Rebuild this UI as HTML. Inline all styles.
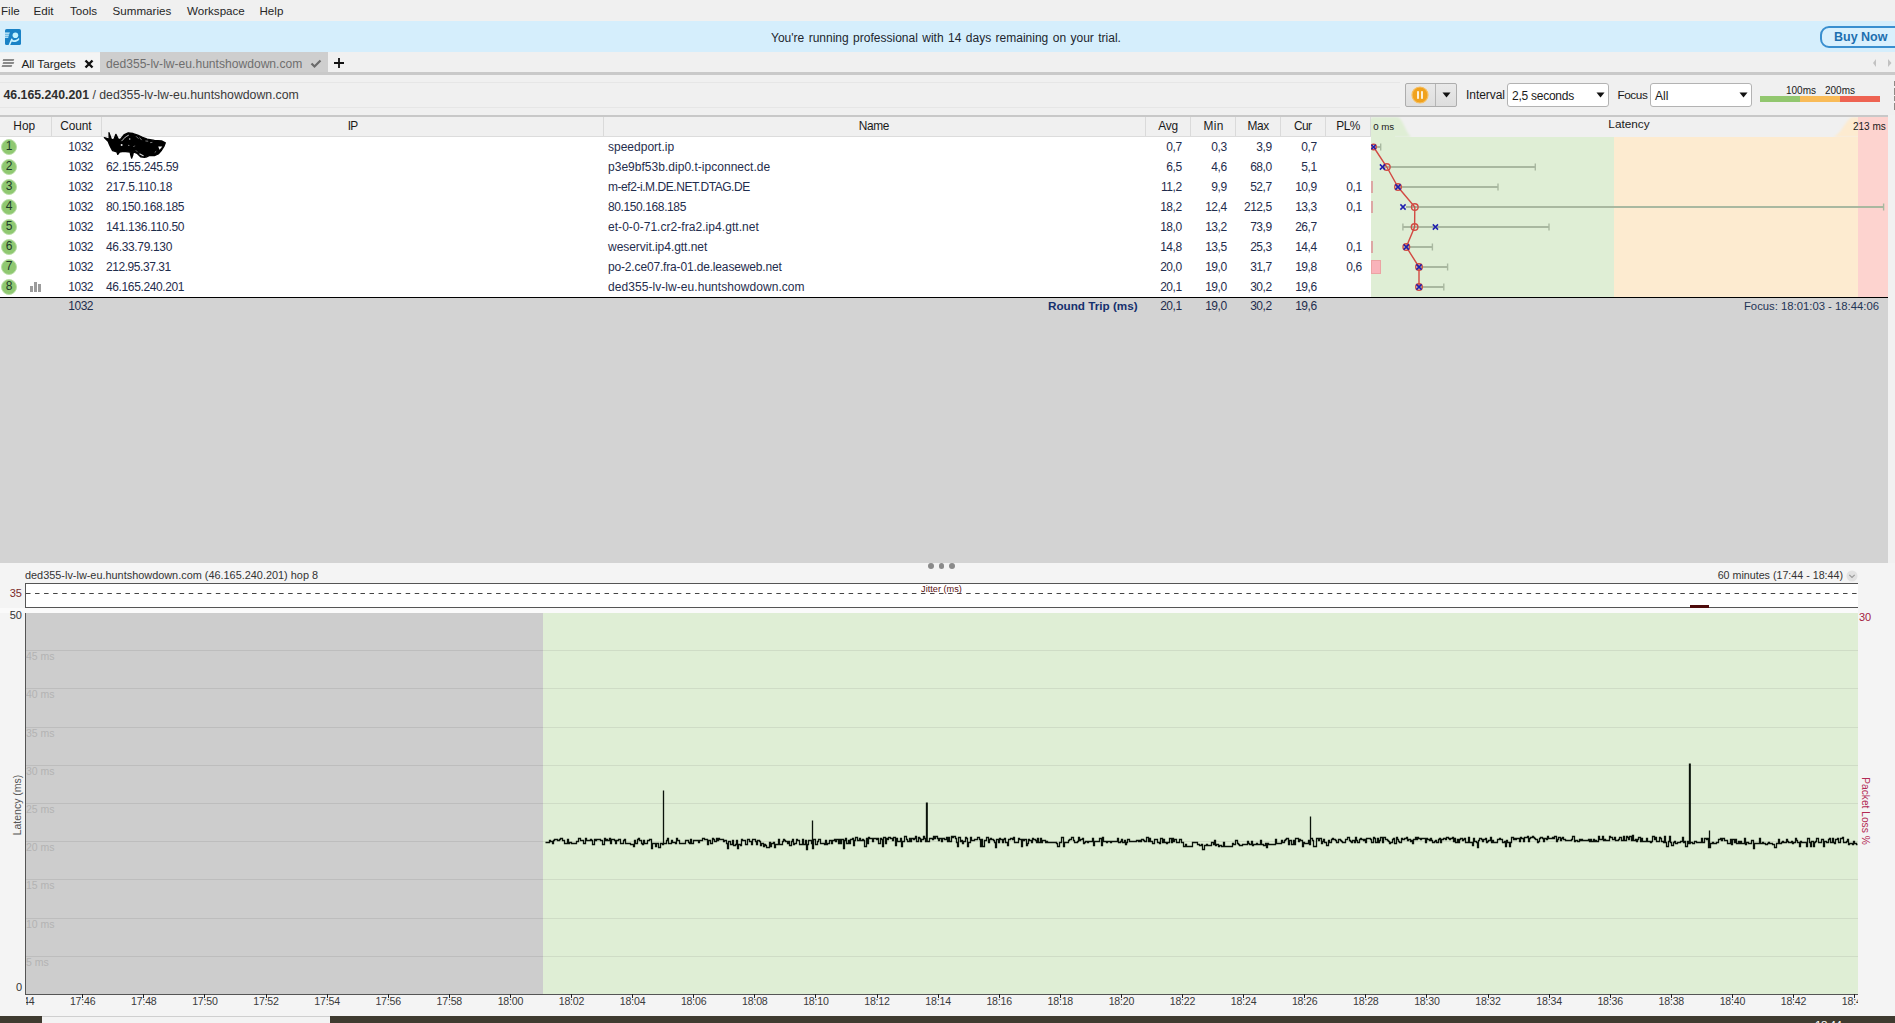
<!DOCTYPE html><html><head><meta charset="utf-8"><title>PingPlotter</title><style>
*{margin:0;padding:0;box-sizing:border-box}
html,body{width:1895px;height:1023px;overflow:hidden;background:#f0f0f0}
body{font-family:"Liberation Sans",sans-serif;font-size:12px;color:#1a1a1a;position:relative}
.a{position:absolute;white-space:nowrap}
.t{position:absolute;white-space:nowrap;line-height:14px;height:14px}
.r{text-align:right}
.c{text-align:center}
</style></head><body><div class="a" style="left:0px;top:0px;width:1895px;height:21px;background:#f0f0f0;"></div>
<div class="t" style="left:1px;top:4px;font-size:11.6px;color:#262626;">File</div>
<div class="t" style="left:33.5px;top:4px;font-size:11.6px;color:#262626;">Edit</div>
<div class="t" style="left:70px;top:4px;font-size:11.6px;color:#262626;">Tools</div>
<div class="t" style="left:112.6px;top:4px;font-size:11.6px;color:#262626;">Summaries</div>
<div class="t" style="left:187px;top:4px;font-size:11.6px;color:#262626;">Workspace</div>
<div class="t" style="left:259.5px;top:4px;font-size:11.6px;color:#262626;">Help</div>
<div class="a" style="left:0px;top:21px;width:1895px;height:31px;background:#d5eefc;"></div>
<svg class="a" style="left:5px;top:29px" width="16" height="16" viewBox="0 0 16 16">
<rect x="0" y="0" width="16" height="16" rx="1.6" fill="#1a82c6"/>
<rect x="0" y="3.5" width="5.8" height="1.3" fill="#d2f4ff"/>
<rect x="0" y="5.5" width="5.2" height="1.3" fill="#d2f4ff"/>
<rect x="0" y="7.5" width="4.6" height="1.3" fill="#d2f4ff"/>
<path d="M5.0 2.8 L7.6 2.8 L3.6 16 L1.0 16 Z" fill="#1a82c6"/>
<path d="M6.3 9.4 L7.8 9.9 L5.2 16 L3.6 16 Z" fill="#d2f4ff"/>
<path d="M6.8 10.8 C9.5 11.6 12.2 11.0 14.0 8.8 L14.3 10.4 C12.4 13.0 9.0 13.4 6.0 12.6 Z" fill="#c4f0ff"/>
<circle cx="10.4" cy="6.3" r="2.8" fill="#c4f3ff"/>
</svg>
<div class="t" style="left:771px;top:31px;font-size:12px;color:#22262e;word-spacing:1.1px">You're running professional with 14 days remaining on your trial.</div>
<div class="a" style="left:1820px;top:26px;width:90px;height:22px;border:2px solid #3a8fcf;border-radius:9px;background:#d9f0fd"></div>
<div class="t" style="left:1834px;top:30px;font-size:12.5px;color:#1d6fb0;font-weight:bold">Buy Now</div>
<div class="a" style="left:0px;top:52px;width:1895px;height:20px;background:#f0f0f0;"></div>
<div class="a" style="left:0px;top:53px;width:100px;height:19px;background:#f4f4f4;"></div>
<div class="a" style="left:100px;top:52px;width:228px;height:20px;background:#cecece;"></div>
<div class="a" style="left:0px;top:72px;width:1895px;height:3px;background:#c9c9c9;"></div>
<div class="a" style="left:3.0px;top:59px;width:11px;height:1.5px;background:#8a8a8a;transform:skewX(-20deg)"></div>
<div class="a" style="left:2.5px;top:62px;width:11px;height:1.5px;background:#8a8a8a;transform:skewX(-20deg)"></div>
<div class="a" style="left:2.0px;top:65px;width:10px;height:1.5px;background:#8a8a8a;transform:skewX(-20deg)"></div>
<div class="t" style="left:21.5px;top:57px;font-size:11.8px;color:#222;letter-spacing:-0.08px">All Targets</div>
<svg class="a" style="left:84px;top:59px" width="10" height="10" viewBox="0 0 10 10"><path d="M1.5 1.5 L8.5 8.5 M8.5 1.5 L1.5 8.5" stroke="#111" stroke-width="2.4" fill="none"/></svg>
<div class="t" style="left:106px;top:57px;font-size:12.1px;color:#6e6e6e;">ded355-lv-lw-eu.huntshowdown.com</div>
<svg class="a" style="left:310px;top:58px" width="12" height="11" viewBox="0 0 12 11"><path d="M1.5 5.5 L4.5 8.5 L10.5 2.5" stroke="#6a6a6a" stroke-width="2.2" fill="none"/></svg>
<svg class="a" style="left:333px;top:57px" width="12" height="12" viewBox="0 0 12 12"><path d="M6 1 V11 M1 6 H11" stroke="#111" stroke-width="1.8" fill="none"/></svg>
<svg class="a" style="left:1870px;top:57px" width="24" height="12" viewBox="0 0 24 12"><path d="M6 2 L3 6 L6 10 Z" fill="#c2c2c2"/><path d="M18 2 L21.5 6 L18 10 Z" fill="#c2c2c2"/></svg>
<div class="a" style="left:0px;top:75px;width:1895px;height:40px;background:#f0f0f0;"></div>
<div class="a" style="left:0px;top:82px;width:1400px;height:1px;background:#e6e6e6;"></div>
<div class="a" style="left:0px;top:107px;width:1400px;height:1px;background:#e6e6e6;"></div>
<div class="t" style="left:3.500px;top:88px;font-size:12.300px;color:#3a3a3a"><b style="color:#2e2e2e">46.165.240.201</b> / ded355-lv-lw-eu.huntshowdown.com</div>
<div class="a" style="left:1405px;top:83px;width:52px;height:24px;border:1px solid #adadad;border-radius:2px;background:linear-gradient(#e9e9e9,#dedede)"></div>
<div class="a" style="left:1435px;top:84px;width:1px;height:22px;background:#b5b5b5;"></div>
<svg class="a" style="left:1411px;top:86px" width="18" height="18" viewBox="0 0 18 18">
<circle cx="9" cy="9" r="8" fill="#f0a21e" stroke="#f6bf62" stroke-width="1.2"/>
<rect x="6" y="5.2" width="2" height="7.6" fill="#fdf0d8"/><rect x="10" y="5.2" width="2" height="7.6" fill="#fdf0d8"/></svg>
<svg class="a" style="left:1442px;top:92px" width="9" height="6" viewBox="0 0 9 6"><path d="M0.5 0.5 H8.5 L4.5 5.5 Z" fill="#111"/></svg>
<div class="t" style="left:1466px;top:88px;font-size:12px;color:#1a1a1a;letter-spacing:-0.05px">Interval</div>
<div class="a" style="left:1507px;top:83px;width:102px;height:24px;border:1px solid #b3b3b3;border-radius:3px;background:#fff"></div>
<div class="t" style="left:1512px;top:89px;font-size:12px;color:#1a1a1a;letter-spacing:-0.25px">2,5 seconds</div>
<svg class="a" style="left:1596px;top:92px" width="9" height="6" viewBox="0 0 9 6"><path d="M0.5 0.5 H8.5 L4.5 5.5 Z" fill="#111"/></svg>
<div class="t" style="left:1617.5px;top:88px;font-size:11.8px;color:#1a1a1a;letter-spacing:-0.45px">Focus</div>
<div class="a" style="left:1650px;top:83px;width:102px;height:24px;border:1px solid #b3b3b3;border-radius:3px;background:#fff"></div>
<div class="t" style="left:1655px;top:89px;font-size:12px;color:#1a1a1a;">All</div>
<svg class="a" style="left:1739px;top:92px" width="9" height="6" viewBox="0 0 9 6"><path d="M0.5 0.5 H8.5 L4.5 5.5 Z" fill="#111"/></svg>
<div class="a" style="left:1760px;top:96px;width:40px;height:6px;background:#92c76f;"></div>
<div class="a" style="left:1800px;top:96px;width:40px;height:6px;background:#f9bb58;"></div>
<div class="a" style="left:1840px;top:96px;width:40px;height:6px;background:#ee6352;"></div>
<div class="t" style="left:1786px;top:84px;font-size:10px;color:#1a1a1a;">100ms</div>
<div class="t" style="left:1825px;top:84px;font-size:10px;color:#1a1a1a;">200ms</div>
<div class="a" style="left:1893.5px;top:81px;width:1.5px;height:4.5px;background:#8e8a86;"></div>
<div class="a" style="left:1893.5px;top:88px;width:1.5px;height:6.5px;background:#8e8a86;"></div>
<div class="a" style="left:1893.5px;top:96.3px;width:1.5px;height:5.200000000000003px;background:#8e8a86;"></div>
<div class="a" style="left:1893.5px;top:103.3px;width:1.5px;height:6.700000000000003px;background:#8e8a86;"></div>
<div class="a" style="left:0px;top:115px;width:1888px;height:2px;background:#c8c8c8;"></div>
<div class="a" style="left:0px;top:117px;width:1888px;height:19px;background:#f0f0f0;"></div>
<div class="a" style="left:0px;top:136px;width:1371px;height:1px;background:#dcdcdc;"></div>
<div class="a" style="left:0px;top:137px;width:1888px;height:160px;background:#ffffff;"></div>
<div class="a" style="left:51px;top:117px;width:1px;height:19px;background:#dadada;"></div>
<div class="a" style="left:101px;top:117px;width:1px;height:19px;background:#dadada;"></div>
<div class="a" style="left:603px;top:117px;width:1px;height:19px;background:#dadada;"></div>
<div class="a" style="left:1145px;top:117px;width:1px;height:19px;background:#dadada;"></div>
<div class="a" style="left:1190px;top:117px;width:1px;height:19px;background:#dadada;"></div>
<div class="a" style="left:1235px;top:117px;width:1px;height:19px;background:#dadada;"></div>
<div class="a" style="left:1280px;top:117px;width:1px;height:19px;background:#dadada;"></div>
<div class="a" style="left:1325px;top:117px;width:1px;height:19px;background:#dadada;"></div>
<div class="a" style="left:1370px;top:117px;width:1px;height:19px;background:#dadada;"></div>
<div class="t" style="left:-5.809125000000001px;top:119px;font-size:11.9px;color:#1a1a1a;width:60px;text-align:center;letter-spacing:-0.018px;">Hop</div>
<div class="t" style="left:45.953375px;top:119px;font-size:11.9px;color:#1a1a1a;width:60px;text-align:center;letter-spacing:-0.093px;">Count</div>
<div class="t" style="left:322.7px;top:119px;font-size:11.9px;color:#1a1a1a;width:60px;text-align:center;letter-spacing:-0.600px;">IP</div>
<div class="t" style="left:843.8211666666666px;top:119px;font-size:11.9px;color:#1a1a1a;width:60px;text-align:center;letter-spacing:-0.358px;">Name</div>
<div class="t" style="left:1138.052625px;top:119px;font-size:11.9px;color:#1a1a1a;width:60px;text-align:center;letter-spacing:-0.295px;">Avg</div>
<div class="t" style="left:1183.6102500000002px;top:119px;font-size:11.9px;color:#1a1a1a;width:60px;text-align:center;letter-spacing:0.420px;">Min</div>
<div class="t" style="left:1228.2272500000001px;top:119px;font-size:11.9px;color:#1a1a1a;width:60px;text-align:center;letter-spacing:-0.345px;">Max</div>
<div class="t" style="left:1272.76025px;top:119px;font-size:11.9px;color:#1a1a1a;width:60px;text-align:center;letter-spacing:-0.480px;">Cur</div>
<div class="t" style="left:1318.0px;top:119px;font-size:11.9px;color:#1a1a1a;width:60px;text-align:center;letter-spacing:-0.600px;">PL%</div>
<div class="a" style="left:1371px;top:137px;width:243px;height:160px;background:#dfeed5;"></div>
<div class="a" style="left:1614px;top:137px;width:244px;height:160px;background:#fdebd0;"></div>
<div class="a" style="left:1858px;top:137px;width:30px;height:160px;background:#fdd3cf;"></div>
<svg class="a" style="left:1371px;top:117px" width="517" height="20" viewBox="0 0 517 20"><defs><filter id="b"><feGaussianBlur stdDeviation="1.2"/></filter></defs><path d="M0 0 H27 C32 2 34 14 40 20 H0 Z" fill="#dfeed5" filter="url(#b)"/><path d="M0 2 H24 V20 H0 Z" fill="#dfeed5"/><path d="M517 0 H482 C474 2 472 16 462 20 H517 Z" fill="#fdebd0" filter="url(#b)"/><rect x="487" y="0" width="30" height="20" fill="#fdd3cf"/></svg>
<div class="t" style="left:1373.2px;top:120px;font-size:9.7px;color:#1a1a1a;">0 ms</div>
<div class="t" style="left:1600px;top:117px;font-size:11.8px;color:#1a1a1a;width:58px;text-align:center;">Latency</div>
<div class="t" style="left:1853px;top:120px;font-size:10px;color:#1a1a1a;">213 ms</div>
<div class="a" style="left:1px;top:139px;width:16px;height:16px;border-radius:8px;background:#8fc871;border:1.5px solid #b9dfa6;font-size:12px;line-height:12px;text-align:center;color:#1f3a2a">1</div>
<div class="t" style="left:50.1px;top:140px;font-size:12px;color:#1f2d4d;width:43px;text-align:right;letter-spacing:-0.45px;">1032</div>
<div class="t" style="left:608px;top:140px;font-size:12px;color:#1f2d4d;letter-spacing:0.004px;">speedport.ip</div>
<div class="t" style="left:1143.7px;top:140px;font-size:12px;color:#1f2d4d;width:38px;text-align:right;letter-spacing:-0.45px;">0,7</div>
<div class="t" style="left:1188.7px;top:140px;font-size:12px;color:#1f2d4d;width:38px;text-align:right;letter-spacing:-0.45px;">0,3</div>
<div class="t" style="left:1233.7px;top:140px;font-size:12px;color:#1f2d4d;width:38px;text-align:right;letter-spacing:-0.45px;">3,9</div>
<div class="t" style="left:1278.7px;top:140px;font-size:12px;color:#1f2d4d;width:38px;text-align:right;letter-spacing:-0.45px;">0,7</div>
<div class="a" style="left:1px;top:159px;width:16px;height:16px;border-radius:8px;background:#8fc871;border:1.5px solid #b9dfa6;font-size:12px;line-height:12px;text-align:center;color:#1f3a2a">2</div>
<div class="t" style="left:50.1px;top:160px;font-size:12px;color:#1f2d4d;width:43px;text-align:right;letter-spacing:-0.45px;">1032</div>
<div class="t" style="left:106px;top:160px;font-size:12px;color:#1f2d4d;letter-spacing:-0.337px;">62.155.245.59</div>
<div class="t" style="left:608px;top:160px;font-size:12px;color:#1f2d4d;letter-spacing:0.026px;">p3e9bf53b.dip0.t-ipconnect.de</div>
<div class="t" style="left:1143.7px;top:160px;font-size:12px;color:#1f2d4d;width:38px;text-align:right;letter-spacing:-0.45px;">6,5</div>
<div class="t" style="left:1188.7px;top:160px;font-size:12px;color:#1f2d4d;width:38px;text-align:right;letter-spacing:-0.45px;">4,6</div>
<div class="t" style="left:1233.7px;top:160px;font-size:12px;color:#1f2d4d;width:38px;text-align:right;letter-spacing:-0.45px;">68,0</div>
<div class="t" style="left:1278.7px;top:160px;font-size:12px;color:#1f2d4d;width:38px;text-align:right;letter-spacing:-0.45px;">5,1</div>
<div class="a" style="left:1px;top:179px;width:16px;height:16px;border-radius:8px;background:#8fc871;border:1.5px solid #b9dfa6;font-size:12px;line-height:12px;text-align:center;color:#1f3a2a">3</div>
<div class="t" style="left:50.1px;top:180px;font-size:12px;color:#1f2d4d;width:43px;text-align:right;letter-spacing:-0.45px;">1032</div>
<div class="t" style="left:106px;top:180px;font-size:12px;color:#1f2d4d;letter-spacing:-0.253px;">217.5.110.18</div>
<div class="t" style="left:608px;top:180px;font-size:12px;color:#1f2d4d;letter-spacing:-0.446px;">m-ef2-i.M.DE.NET.DTAG.DE</div>
<div class="t" style="left:1143.7px;top:180px;font-size:12px;color:#1f2d4d;width:38px;text-align:right;letter-spacing:-0.45px;">11,2</div>
<div class="t" style="left:1188.7px;top:180px;font-size:12px;color:#1f2d4d;width:38px;text-align:right;letter-spacing:-0.45px;">9,9</div>
<div class="t" style="left:1233.7px;top:180px;font-size:12px;color:#1f2d4d;width:38px;text-align:right;letter-spacing:-0.45px;">52,7</div>
<div class="t" style="left:1278.7px;top:180px;font-size:12px;color:#1f2d4d;width:38px;text-align:right;letter-spacing:-0.45px;">10,9</div>
<div class="t" style="left:1323.7px;top:180px;font-size:12px;color:#1f2d4d;width:38px;text-align:right;letter-spacing:-0.45px;">0,1</div>
<div class="a" style="left:1px;top:199px;width:16px;height:16px;border-radius:8px;background:#8fc871;border:1.5px solid #b9dfa6;font-size:12px;line-height:12px;text-align:center;color:#1f3a2a">4</div>
<div class="t" style="left:50.1px;top:200px;font-size:12px;color:#1f2d4d;width:43px;text-align:right;letter-spacing:-0.45px;">1032</div>
<div class="t" style="left:106px;top:200px;font-size:12px;color:#1f2d4d;letter-spacing:-0.385px;">80.150.168.185</div>
<div class="t" style="left:608px;top:200px;font-size:12px;color:#1f2d4d;letter-spacing:-0.392px;">80.150.168.185</div>
<div class="t" style="left:1143.7px;top:200px;font-size:12px;color:#1f2d4d;width:38px;text-align:right;letter-spacing:-0.45px;">18,2</div>
<div class="t" style="left:1188.7px;top:200px;font-size:12px;color:#1f2d4d;width:38px;text-align:right;letter-spacing:-0.45px;">12,4</div>
<div class="t" style="left:1233.7px;top:200px;font-size:12px;color:#1f2d4d;width:38px;text-align:right;letter-spacing:-0.45px;">212,5</div>
<div class="t" style="left:1278.7px;top:200px;font-size:12px;color:#1f2d4d;width:38px;text-align:right;letter-spacing:-0.45px;">13,3</div>
<div class="t" style="left:1323.7px;top:200px;font-size:12px;color:#1f2d4d;width:38px;text-align:right;letter-spacing:-0.45px;">0,1</div>
<div class="a" style="left:1px;top:219px;width:16px;height:16px;border-radius:8px;background:#8fc871;border:1.5px solid #b9dfa6;font-size:12px;line-height:12px;text-align:center;color:#1f3a2a">5</div>
<div class="t" style="left:50.1px;top:220px;font-size:12px;color:#1f2d4d;width:43px;text-align:right;letter-spacing:-0.45px;">1032</div>
<div class="t" style="left:106px;top:220px;font-size:12px;color:#1f2d4d;letter-spacing:-0.308px;">141.136.110.50</div>
<div class="t" style="left:608px;top:220px;font-size:12px;color:#1f2d4d;letter-spacing:0.048px;">et-0-0-71.cr2-fra2.ip4.gtt.net</div>
<div class="t" style="left:1143.7px;top:220px;font-size:12px;color:#1f2d4d;width:38px;text-align:right;letter-spacing:-0.45px;">18,0</div>
<div class="t" style="left:1188.7px;top:220px;font-size:12px;color:#1f2d4d;width:38px;text-align:right;letter-spacing:-0.45px;">13,2</div>
<div class="t" style="left:1233.7px;top:220px;font-size:12px;color:#1f2d4d;width:38px;text-align:right;letter-spacing:-0.45px;">73,9</div>
<div class="t" style="left:1278.7px;top:220px;font-size:12px;color:#1f2d4d;width:38px;text-align:right;letter-spacing:-0.45px;">26,7</div>
<div class="a" style="left:1px;top:239px;width:16px;height:16px;border-radius:8px;background:#8fc871;border:1.5px solid #b9dfa6;font-size:12px;line-height:12px;text-align:center;color:#1f3a2a">6</div>
<div class="t" style="left:50.1px;top:240px;font-size:12px;color:#1f2d4d;width:43px;text-align:right;letter-spacing:-0.45px;">1032</div>
<div class="t" style="left:106px;top:240px;font-size:12px;color:#1f2d4d;letter-spacing:-0.335px;">46.33.79.130</div>
<div class="t" style="left:608px;top:240px;font-size:12px;color:#1f2d4d;letter-spacing:-0.039px;">weservit.ip4.gtt.net</div>
<div class="t" style="left:1143.7px;top:240px;font-size:12px;color:#1f2d4d;width:38px;text-align:right;letter-spacing:-0.45px;">14,8</div>
<div class="t" style="left:1188.7px;top:240px;font-size:12px;color:#1f2d4d;width:38px;text-align:right;letter-spacing:-0.45px;">13,5</div>
<div class="t" style="left:1233.7px;top:240px;font-size:12px;color:#1f2d4d;width:38px;text-align:right;letter-spacing:-0.45px;">25,3</div>
<div class="t" style="left:1278.7px;top:240px;font-size:12px;color:#1f2d4d;width:38px;text-align:right;letter-spacing:-0.45px;">14,4</div>
<div class="t" style="left:1323.7px;top:240px;font-size:12px;color:#1f2d4d;width:38px;text-align:right;letter-spacing:-0.45px;">0,1</div>
<div class="a" style="left:1px;top:259px;width:16px;height:16px;border-radius:8px;background:#8fc871;border:1.5px solid #b9dfa6;font-size:12px;line-height:12px;text-align:center;color:#1f3a2a">7</div>
<div class="t" style="left:50.1px;top:260px;font-size:12px;color:#1f2d4d;width:43px;text-align:right;letter-spacing:-0.45px;">1032</div>
<div class="t" style="left:106px;top:260px;font-size:12px;color:#1f2d4d;letter-spacing:-0.435px;">212.95.37.31</div>
<div class="t" style="left:608px;top:260px;font-size:12px;color:#1f2d4d;letter-spacing:-0.161px;">po-2.ce07.fra-01.de.leaseweb.net</div>
<div class="t" style="left:1143.7px;top:260px;font-size:12px;color:#1f2d4d;width:38px;text-align:right;letter-spacing:-0.45px;">20,0</div>
<div class="t" style="left:1188.7px;top:260px;font-size:12px;color:#1f2d4d;width:38px;text-align:right;letter-spacing:-0.45px;">19,0</div>
<div class="t" style="left:1233.7px;top:260px;font-size:12px;color:#1f2d4d;width:38px;text-align:right;letter-spacing:-0.45px;">31,7</div>
<div class="t" style="left:1278.7px;top:260px;font-size:12px;color:#1f2d4d;width:38px;text-align:right;letter-spacing:-0.45px;">19,8</div>
<div class="t" style="left:1323.7px;top:260px;font-size:12px;color:#1f2d4d;width:38px;text-align:right;letter-spacing:-0.45px;">0,6</div>
<div class="a" style="left:1px;top:279px;width:16px;height:16px;border-radius:8px;background:#8fc871;border:1.5px solid #b9dfa6;font-size:12px;line-height:12px;text-align:center;color:#1f3a2a">8</div>
<div class="t" style="left:50.1px;top:280px;font-size:12px;color:#1f2d4d;width:43px;text-align:right;letter-spacing:-0.45px;">1032</div>
<div class="t" style="left:106px;top:280px;font-size:12px;color:#1f2d4d;letter-spacing:-0.377px;">46.165.240.201</div>
<div class="t" style="left:608px;top:280px;font-size:12px;color:#1f2d4d;letter-spacing:0.059px;">ded355-lv-lw-eu.huntshowdown.com</div>
<div class="t" style="left:1143.7px;top:280px;font-size:12px;color:#1f2d4d;width:38px;text-align:right;letter-spacing:-0.45px;">20,1</div>
<div class="t" style="left:1188.7px;top:280px;font-size:12px;color:#1f2d4d;width:38px;text-align:right;letter-spacing:-0.45px;">19,0</div>
<div class="t" style="left:1233.7px;top:280px;font-size:12px;color:#1f2d4d;width:38px;text-align:right;letter-spacing:-0.45px;">30,2</div>
<div class="t" style="left:1278.7px;top:280px;font-size:12px;color:#1f2d4d;width:38px;text-align:right;letter-spacing:-0.45px;">19,6</div>
<div class="a" style="left:30px;top:286.1px;width:2.7px;height:5.5px;background:#9c9c9c;"></div>
<div class="a" style="left:34.2px;top:282.0px;width:2.7px;height:9.6px;background:#9c9c9c;"></div>
<div class="a" style="left:38.2px;top:284.0px;width:2.7px;height:7.6px;background:#9c9c9c;"></div>
<svg class="a" style="left:100px;top:128px" width="70" height="34" viewBox="100 128 70 34">
<path d="M104.300 137.600 L109.200 139.200 L109 132.600 L111.500 139.800 L114 139.200 L115.900 134.300 L118.500 139.500 L120.600 139.200 L124.400 134.500 L128.200 132.800 L133 133.500 L137.700 135.200 L142.500 137.300 L147.200 139.200 L154.400 140.400 L161.500 140.900 L165.300 142.800 L163.900 146.400 L161.500 150.200 L158.200 154 L154.400 155.600 L149.600 155.400 L147 156.800 L144.400 157.300 L140.600 156.800 L137.300 153.500 L133.400 151.800 L132.800 155 L131.600 158.200 L130.800 155 L130.100 152.100 L123.500 151.400 L119.500 152 L117.800 154.400 L116.800 151.800 L112.600 150.600 L110.700 147.300 L109.200 144 L108.300 141.500 Z" fill="#000" stroke="#000" stroke-width="1.300" stroke-linejoin="round"/>
<g stroke="#fff" fill="none" stroke-linecap="round">
<path d="M121.800 140.800 C123.500 138.600 126 136.400 128.400 135.300" stroke-width="0.900" opacity="0.850"/>
<path d="M139.900 153.900 L143.200 155.700" stroke-width="1.100" opacity="0.850"/>
<path d="M136.400 136.600 L138.200 138.400 M139.800 137.800 L141.400 139.800" stroke-width="0.700" opacity="0.700"/>
<path d="M145.800 141 L147.800 141.200 M150.500 142.600 L152 142.400 M155 152.300 L155.900 151.500" stroke-width="0.800" opacity="0.600"/>
<path d="M133.500 146.500 L134.800 146 M136 150.500 L137.500 152" stroke-width="0.700" opacity="0.500"/>
</g>
<path d="M158.200 146.600 L162.300 146.400 L159.600 149.800 Z" fill="#fff"/>
<circle cx="121.600" cy="145" r="1" fill="#fff" opacity="0.900"/>
<circle cx="129.700" cy="139" r="0.800" fill="#fff" opacity="0.800"/>
<circle cx="128.800" cy="145.400" r="0.600" fill="#fff" opacity="0.600"/>
</svg>
<div class="a" style="left:1371px;top:181px;width:1.5px;height:12px;background:#dda7a4;"></div>
<div class="a" style="left:1371px;top:201px;width:1.5px;height:12px;background:#dda7a4;"></div>
<div class="a" style="left:1371px;top:241px;width:1.5px;height:12px;background:#dda7a4;"></div>
<div class="a" style="left:1371px;top:260px;width:10px;height:14px;background:#f9b3ba;border:1px solid #eca3a3"></div>
<svg class="a" style="left:1371px;top:0" width="517" height="300" viewBox="1371 0 517 300"><path d="M1373 147 H1380.7" stroke="#a9b8a0" stroke-width="2" fill="none"/><path d="M1380.7 143.5 V150.5" stroke="#a9b8a0" stroke-width="1.4" fill="none"/><path d="M1383 167 H1535.3" stroke="#a9b8a0" stroke-width="2" fill="none"/><path d="M1535.3 163.5 V170.5" stroke="#a9b8a0" stroke-width="1.4" fill="none"/><path d="M1396 187 H1498" stroke="#a9b8a0" stroke-width="2" fill="none"/><path d="M1498 183.5 V190.5" stroke="#a9b8a0" stroke-width="1.4" fill="none"/><path d="M1406 207 H1883.6" stroke="#a9b8a0" stroke-width="2" fill="none"/><path d="M1883.6 203.5 V210.5" stroke="#a9b8a0" stroke-width="1.4" fill="none"/><path d="M1402.9 227 H1549" stroke="#a9b8a0" stroke-width="2" fill="none"/><path d="M1549 223.5 V230.5" stroke="#a9b8a0" stroke-width="1.4" fill="none"/><path d="M1404.5 247 H1432.4" stroke="#a9b8a0" stroke-width="2" fill="none"/><path d="M1432.4 243.5 V250.5" stroke="#a9b8a0" stroke-width="1.4" fill="none"/><path d="M1417.5 267 H1447.6" stroke="#a9b8a0" stroke-width="2" fill="none"/><path d="M1447.6 263.5 V270.5" stroke="#a9b8a0" stroke-width="1.4" fill="none"/><path d="M1417.5 287 H1443.8" stroke="#a9b8a0" stroke-width="2" fill="none"/><path d="M1443.8 283.5 V290.5" stroke="#a9b8a0" stroke-width="1.4" fill="none"/><path d="M1402.9 223.5 V230.5" stroke="#a9b8a0" stroke-width="1.4" fill="none"/><polyline points="1373.6,147 1386.8,167 1398,187 1414.8,207 1414.6,227 1406.3,247 1419,267 1419,287" stroke="#d24a43" stroke-width="1.4" fill="none"/><circle cx="1373.6" cy="147" r="2.7" stroke="#d24a43" stroke-width="1.4" fill="none"/><circle cx="1386.8" cy="167" r="3.3" stroke="#d24a43" stroke-width="1.4" fill="none"/><circle cx="1398" cy="187" r="3.3" stroke="#d24a43" stroke-width="1.4" fill="none"/><circle cx="1414.8" cy="207" r="3.3" stroke="#d24a43" stroke-width="1.4" fill="none"/><circle cx="1414.6" cy="227" r="3.3" stroke="#d24a43" stroke-width="1.4" fill="none"/><circle cx="1406.3" cy="247" r="3.3" stroke="#d24a43" stroke-width="1.4" fill="none"/><circle cx="1419" cy="267" r="3.3" stroke="#d24a43" stroke-width="1.4" fill="none"/><circle cx="1419" cy="287" r="3.3" stroke="#d24a43" stroke-width="1.4" fill="none"/><path d="M1371.3999999999999 144.8 L1375.8 149.2 M1375.8 144.8 L1371.3999999999999 149.2" stroke="#1f1fae" stroke-width="1.5" fill="none"/><path d="M1379.9 164.4 L1385.1 169.6 M1385.1 164.4 L1379.9 169.6" stroke="#1f1fae" stroke-width="1.5" fill="none"/><path d="M1395.4 184.4 L1400.6 189.6 M1400.6 184.4 L1395.4 189.6" stroke="#1f1fae" stroke-width="1.5" fill="none"/><path d="M1400.4 204.4 L1405.6 209.6 M1405.6 204.4 L1400.4 209.6" stroke="#1f1fae" stroke-width="1.5" fill="none"/><path d="M1432.8000000000002 224.4 L1438.0 229.6 M1438.0 224.4 L1432.8000000000002 229.6" stroke="#1f1fae" stroke-width="1.5" fill="none"/><path d="M1403.7 244.4 L1408.8999999999999 249.6 M1408.8999999999999 244.4 L1403.7 249.6" stroke="#1f1fae" stroke-width="1.5" fill="none"/><path d="M1416.4 264.4 L1421.6 269.6 M1421.6 264.4 L1416.4 269.6" stroke="#1f1fae" stroke-width="1.5" fill="none"/><path d="M1416.4 284.4 L1421.6 289.6 M1421.6 284.4 L1416.4 289.6" stroke="#1f1fae" stroke-width="1.5" fill="none"/></svg>
<div class="a" style="left:0px;top:297px;width:1888px;height:1.4px;background:#000;"></div>
<div class="a" style="left:0px;top:298.4px;width:1888px;height:264.6px;background:#d3d3d3;"></div>
<div class="a" style="left:1888px;top:115px;width:7px;height:448px;background:#f1f1f1;"></div>
<div class="t" style="left:50.1px;top:299px;font-size:12px;color:#1f2d4d;width:43px;text-align:right;letter-spacing:-0.45px;">1032</div>
<div class="t" style="left:1039.6px;top:299px;font-size:11.7px;color:#16306e;width:98px;text-align:right;font-weight:bold">Round Trip (ms)</div>
<div class="t" style="left:1143.7px;top:299px;font-size:12px;color:#1f2d4d;width:38px;text-align:right;letter-spacing:-0.45px;">20,1</div>
<div class="t" style="left:1188.7px;top:299px;font-size:12px;color:#1f2d4d;width:38px;text-align:right;letter-spacing:-0.45px;">19,0</div>
<div class="t" style="left:1233.7px;top:299px;font-size:12px;color:#1f2d4d;width:38px;text-align:right;letter-spacing:-0.45px;">30,2</div>
<div class="t" style="left:1278.7px;top:299px;font-size:12px;color:#1f2d4d;width:38px;text-align:right;letter-spacing:-0.45px;">19,6</div>
<div class="t" style="left:1700px;top:299px;font-size:11.3px;color:#1f3556;width:179px;text-align:right;">Focus: 18:01:03 - 18:44:06</div>
<div class="a" style="left:0px;top:563px;width:1895px;height:453px;background:#f4f4f4;"></div>
<div class="a" style="left:928.3px;top:563.3px;width:5.4px;height:5.4px;border-radius:3px;background:#8a8a8a"></div>
<div class="a" style="left:938.8px;top:563.3px;width:5.4px;height:5.4px;border-radius:3px;background:#8a8a8a"></div>
<div class="a" style="left:949.3px;top:563.3px;width:5.4px;height:5.4px;border-radius:3px;background:#8a8a8a"></div>
<div class="t" style="left:25px;top:568px;font-size:10.9px;color:#333;">ded355-lv-lw-eu.huntshowdown.com (46.165.240.201) hop 8</div>
<div class="t" style="left:1700px;top:568px;font-size:10.7px;color:#333;width:143px;text-align:right;">60 minutes (17:44 - 18:44)</div>
<svg class="a" style="left:1846px;top:570px" width="12" height="12" viewBox="0 0 12 12"><circle cx="6" cy="6" r="5.5" fill="#e2e2e2"/><path d="M3.3 4.8 L6 7.5 L8.7 4.8" stroke="#9a9a9a" stroke-width="1.2" fill="none"/></svg>
<div class="a" style="left:25px;top:583px;width:1833px;height:25px;background:#ffffff;border-top:1px solid #555;border-bottom:1px solid #555;border-left:1px solid #555"></div>
<svg class="a" style="left:26px;top:592px" width="1832" height="3"><path d="M0 1.5 H1832" stroke="#444" stroke-width="1" stroke-dasharray="4.500 4.540" fill="none"/></svg>
<div class="t" style="left:900px;top:581.5px;font-size:9.2px;color:#5c1212;width:83px;text-align:center;">Jitter (ms)</div>
<div class="a" style="left:1690px;top:605px;width:19px;height:2.5px;background:#4d0b0b;"></div>
<div class="t" style="left:0px;top:586px;font-size:11px;color:#7a2a2a;width:22px;text-align:right;">35</div>
<div class="a" style="left:0px;top:608px;width:1858px;height:5px;background:#fafafa;"></div>
<div class="a" style="left:26px;top:613px;width:517px;height:381px;background:#cdcdcd;"></div>
<div class="a" style="left:543px;top:613px;width:1315px;height:381px;background:#dfeed5;"></div>
<div class="a" style="left:25px;top:613px;width:1px;height:382px;background:#555;"></div>
<div class="a" style="left:25px;top:994px;width:1833px;height:1px;background:#555;"></div>
<div class="a" style="left:26px;top:956px;width:517px;height:1px;background:#bdbdbd;"></div>
<div class="a" style="left:543px;top:956px;width:1315px;height:1px;background:#cfdcc6;"></div>
<div class="t" style="left:26px;top:955px;font-size:10.5px;color:#b3b3b3;">5 ms</div>
<div class="a" style="left:26px;top:918px;width:517px;height:1px;background:#bdbdbd;"></div>
<div class="a" style="left:543px;top:918px;width:1315px;height:1px;background:#cfdcc6;"></div>
<div class="t" style="left:26px;top:917px;font-size:10.5px;color:#b3b3b3;">10 ms</div>
<div class="a" style="left:26px;top:879px;width:517px;height:1px;background:#bdbdbd;"></div>
<div class="a" style="left:543px;top:879px;width:1315px;height:1px;background:#cfdcc6;"></div>
<div class="t" style="left:26px;top:878px;font-size:10.5px;color:#b3b3b3;">15 ms</div>
<div class="a" style="left:26px;top:841px;width:517px;height:1px;background:#bdbdbd;"></div>
<div class="a" style="left:543px;top:841px;width:1315px;height:1px;background:#cfdcc6;"></div>
<div class="t" style="left:26px;top:840px;font-size:10.5px;color:#b3b3b3;">20 ms</div>
<div class="a" style="left:26px;top:803px;width:517px;height:1px;background:#bdbdbd;"></div>
<div class="a" style="left:543px;top:803px;width:1315px;height:1px;background:#cfdcc6;"></div>
<div class="t" style="left:26px;top:802px;font-size:10.5px;color:#b3b3b3;">25 ms</div>
<div class="a" style="left:26px;top:765px;width:517px;height:1px;background:#bdbdbd;"></div>
<div class="a" style="left:543px;top:765px;width:1315px;height:1px;background:#cfdcc6;"></div>
<div class="t" style="left:26px;top:764px;font-size:10.5px;color:#b3b3b3;">30 ms</div>
<div class="a" style="left:26px;top:727px;width:517px;height:1px;background:#bdbdbd;"></div>
<div class="a" style="left:543px;top:727px;width:1315px;height:1px;background:#cfdcc6;"></div>
<div class="t" style="left:26px;top:726px;font-size:10.5px;color:#b3b3b3;">35 ms</div>
<div class="a" style="left:26px;top:688px;width:517px;height:1px;background:#bdbdbd;"></div>
<div class="a" style="left:543px;top:688px;width:1315px;height:1px;background:#cfdcc6;"></div>
<div class="t" style="left:26px;top:687px;font-size:10.5px;color:#b3b3b3;">40 ms</div>
<div class="a" style="left:26px;top:650px;width:517px;height:1px;background:#bdbdbd;"></div>
<div class="a" style="left:543px;top:650px;width:1315px;height:1px;background:#cfdcc6;"></div>
<div class="t" style="left:26px;top:649px;font-size:10.5px;color:#b3b3b3;">45 ms</div>
<div class="t" style="left:0px;top:608px;font-size:11px;color:#333;width:22px;text-align:right;">50</div>
<div class="t" style="left:0px;top:980px;font-size:11px;color:#333;width:22px;text-align:right;">0</div>
<div class="t" style="left:1859px;top:610px;font-size:11px;color:#a3203f;">30</div>
<div class="a" style="left:17px;top:805px;width:0;height:0"><div class="t" style="transform:translate(-50%,-50%) rotate(-90deg);font-size:10.5px;color:#555;left:0;top:0">Latency (ms)</div></div>
<div class="a" style="left:1865px;top:811px;width:0;height:0"><div class="t" style="transform:translate(-50%,-50%) rotate(90deg);font-size:10.2px;color:#b32a55;left:0;top:0">Packet Loss %</div></div>
<div class="a" style="left:26px;top:994px;width:1832px;height:20px;overflow:hidden">
<div class="t" style="left:-24.4px;top:0px;width:40px;text-align:center;font-size:10.6px;letter-spacing:-0.2px;color:#3a3a3a">17:44</div>
<div class="a" style="left:-4.899999999999999px;top:0;width:1px;height:4px;background:#222"></div>
<div class="t" style="left:36.7px;top:0px;width:40px;text-align:center;font-size:10.6px;letter-spacing:-0.2px;color:#3a3a3a">17:46</div>
<div class="a" style="left:56.2px;top:0;width:1px;height:4px;background:#222"></div>
<div class="t" style="left:97.80000000000001px;top:0px;width:40px;text-align:center;font-size:10.6px;letter-spacing:-0.2px;color:#3a3a3a">17:48</div>
<div class="a" style="left:117.30000000000001px;top:0;width:1px;height:4px;background:#222"></div>
<div class="t" style="left:158.9px;top:0px;width:40px;text-align:center;font-size:10.6px;letter-spacing:-0.2px;color:#3a3a3a">17:50</div>
<div class="a" style="left:178.4px;top:0;width:1px;height:4px;background:#222"></div>
<div class="t" style="left:220.0px;top:0px;width:40px;text-align:center;font-size:10.6px;letter-spacing:-0.2px;color:#3a3a3a">17:52</div>
<div class="a" style="left:239.5px;top:0;width:1px;height:4px;background:#222"></div>
<div class="t" style="left:281.1px;top:0px;width:40px;text-align:center;font-size:10.6px;letter-spacing:-0.2px;color:#3a3a3a">17:54</div>
<div class="a" style="left:300.6px;top:0;width:1px;height:4px;background:#222"></div>
<div class="t" style="left:342.20000000000005px;top:0px;width:40px;text-align:center;font-size:10.6px;letter-spacing:-0.2px;color:#3a3a3a">17:56</div>
<div class="a" style="left:361.70000000000005px;top:0;width:1px;height:4px;background:#222"></div>
<div class="t" style="left:403.3px;top:0px;width:40px;text-align:center;font-size:10.6px;letter-spacing:-0.2px;color:#3a3a3a">17:58</div>
<div class="a" style="left:422.8px;top:0;width:1px;height:4px;background:#222"></div>
<div class="t" style="left:464.40000000000003px;top:0px;width:40px;text-align:center;font-size:10.6px;letter-spacing:-0.2px;color:#3a3a3a">18:00</div>
<div class="a" style="left:483.90000000000003px;top:0;width:1px;height:4px;background:#222"></div>
<div class="t" style="left:525.5px;top:0px;width:40px;text-align:center;font-size:10.6px;letter-spacing:-0.2px;color:#3a3a3a">18:02</div>
<div class="a" style="left:545.0px;top:0;width:1px;height:4px;background:#222"></div>
<div class="t" style="left:586.6px;top:0px;width:40px;text-align:center;font-size:10.6px;letter-spacing:-0.2px;color:#3a3a3a">18:04</div>
<div class="a" style="left:606.1px;top:0;width:1px;height:4px;background:#222"></div>
<div class="t" style="left:647.7px;top:0px;width:40px;text-align:center;font-size:10.6px;letter-spacing:-0.2px;color:#3a3a3a">18:06</div>
<div class="a" style="left:667.2px;top:0;width:1px;height:4px;background:#222"></div>
<div class="t" style="left:708.8000000000001px;top:0px;width:40px;text-align:center;font-size:10.6px;letter-spacing:-0.2px;color:#3a3a3a">18:08</div>
<div class="a" style="left:728.3000000000001px;top:0;width:1px;height:4px;background:#222"></div>
<div class="t" style="left:769.9000000000001px;top:0px;width:40px;text-align:center;font-size:10.6px;letter-spacing:-0.2px;color:#3a3a3a">18:10</div>
<div class="a" style="left:789.4000000000001px;top:0;width:1px;height:4px;background:#222"></div>
<div class="t" style="left:831.0px;top:0px;width:40px;text-align:center;font-size:10.6px;letter-spacing:-0.2px;color:#3a3a3a">18:12</div>
<div class="a" style="left:850.5px;top:0;width:1px;height:4px;background:#222"></div>
<div class="t" style="left:892.1px;top:0px;width:40px;text-align:center;font-size:10.6px;letter-spacing:-0.2px;color:#3a3a3a">18:14</div>
<div class="a" style="left:911.6px;top:0;width:1px;height:4px;background:#222"></div>
<div class="t" style="left:953.2px;top:0px;width:40px;text-align:center;font-size:10.6px;letter-spacing:-0.2px;color:#3a3a3a">18:16</div>
<div class="a" style="left:972.7px;top:0;width:1px;height:4px;background:#222"></div>
<div class="t" style="left:1014.3px;top:0px;width:40px;text-align:center;font-size:10.6px;letter-spacing:-0.2px;color:#3a3a3a">18:18</div>
<div class="a" style="left:1033.8px;top:0;width:1px;height:4px;background:#222"></div>
<div class="t" style="left:1075.3999999999999px;top:0px;width:40px;text-align:center;font-size:10.6px;letter-spacing:-0.2px;color:#3a3a3a">18:20</div>
<div class="a" style="left:1094.8999999999999px;top:0;width:1px;height:4px;background:#222"></div>
<div class="t" style="left:1136.5px;top:0px;width:40px;text-align:center;font-size:10.6px;letter-spacing:-0.2px;color:#3a3a3a">18:22</div>
<div class="a" style="left:1156.0px;top:0;width:1px;height:4px;background:#222"></div>
<div class="t" style="left:1197.6px;top:0px;width:40px;text-align:center;font-size:10.6px;letter-spacing:-0.2px;color:#3a3a3a">18:24</div>
<div class="a" style="left:1217.1px;top:0;width:1px;height:4px;background:#222"></div>
<div class="t" style="left:1258.7px;top:0px;width:40px;text-align:center;font-size:10.6px;letter-spacing:-0.2px;color:#3a3a3a">18:26</div>
<div class="a" style="left:1278.2px;top:0;width:1px;height:4px;background:#222"></div>
<div class="t" style="left:1319.8px;top:0px;width:40px;text-align:center;font-size:10.6px;letter-spacing:-0.2px;color:#3a3a3a">18:28</div>
<div class="a" style="left:1339.3px;top:0;width:1px;height:4px;background:#222"></div>
<div class="t" style="left:1380.8999999999999px;top:0px;width:40px;text-align:center;font-size:10.6px;letter-spacing:-0.2px;color:#3a3a3a">18:30</div>
<div class="a" style="left:1400.3999999999999px;top:0;width:1px;height:4px;background:#222"></div>
<div class="t" style="left:1442.0px;top:0px;width:40px;text-align:center;font-size:10.6px;letter-spacing:-0.2px;color:#3a3a3a">18:32</div>
<div class="a" style="left:1461.5px;top:0;width:1px;height:4px;background:#222"></div>
<div class="t" style="left:1503.1px;top:0px;width:40px;text-align:center;font-size:10.6px;letter-spacing:-0.2px;color:#3a3a3a">18:34</div>
<div class="a" style="left:1522.6px;top:0;width:1px;height:4px;background:#222"></div>
<div class="t" style="left:1564.2px;top:0px;width:40px;text-align:center;font-size:10.6px;letter-spacing:-0.2px;color:#3a3a3a">18:36</div>
<div class="a" style="left:1583.7px;top:0;width:1px;height:4px;background:#222"></div>
<div class="t" style="left:1625.3px;top:0px;width:40px;text-align:center;font-size:10.6px;letter-spacing:-0.2px;color:#3a3a3a">18:38</div>
<div class="a" style="left:1644.8px;top:0;width:1px;height:4px;background:#222"></div>
<div class="t" style="left:1686.3999999999999px;top:0px;width:40px;text-align:center;font-size:10.6px;letter-spacing:-0.2px;color:#3a3a3a">18:40</div>
<div class="a" style="left:1705.8999999999999px;top:0;width:1px;height:4px;background:#222"></div>
<div class="t" style="left:1747.5px;top:0px;width:40px;text-align:center;font-size:10.6px;letter-spacing:-0.2px;color:#3a3a3a">18:42</div>
<div class="a" style="left:1767.0px;top:0;width:1px;height:4px;background:#222"></div>
<div class="t" style="left:1808.6px;top:0px;width:40px;text-align:center;font-size:10.6px;letter-spacing:-0.2px;color:#3a3a3a">18:44</div>
<div class="a" style="left:1828.1px;top:0;width:1px;height:4px;background:#222"></div>
</div>
<svg class="a" style="left:0;top:600px" width="1895" height="400" viewBox="0 600 1895 400"><path d="M545.5 842.5H546.5H548.5H549.5V840.5H550.5V841.5H552.5V843.5H553.5V840.5H554.5V839.5H555.5H557.5V840.5H558.5H559.5V839.5H560.5V838.5H562.5V840.5H563.5H564.5V843.5H566.5H567.5V839.5H568.5V843.5H569.5V842.5H571.5V843.5H572.5H573.5H574.5H576.5V841.5H577.5H578.5V838.5H580.5V840.5H581.5H582.5H583.5V843.5H585.5V838.5H586.5V840.5H587.5H588.5H590.5V839.5H591.5V840.5H592.5V844.5H594.5V839.5H595.5V840.5H596.5V839.5H597.5H599.5H600.5V840.5H601.5H602.5V844.5H604.5V838.5H605.5V840.5H606.5V839.5H607.5V840.5H609.5V838.5H610.5V843.5H611.5V839.5H613.5H614.5V840.5H615.5V843.5H616.5V840.5H618.5V839.5H619.5H620.5V843.5H621.5H623.5V840.5H624.5V839.5H625.5V843.5H627.5H628.5H629.5H630.5V844.5H632.5H633.5V846.5H634.5V840.5H635.5V843.5H637.5V839.5H638.5V838.5H639.5V840.5H641.5V843.5H642.5V844.5H643.5V840.5H644.5V843.5H646.5H647.5V840.5H648.5H649.5V839.5H651.5V848.5H652.5V843.5H653.5H655.5V846.5H656.5V843.5H657.5H658.5V847.5H660.5V843.5H661.5H662.5V844.5H663.5V790.5V844.5H663.5V843.5H665.5H666.5V840.5H667.5V838.5H668.5V843.5H670.5H671.5V840.5H672.5V842.5H674.5H675.5V843.5H676.5V838.5H677.5V840.5H679.5V843.5H680.5H681.5H682.5H684.5H685.5V840.5H686.5H688.5V842.5H689.5V843.5H690.5V839.5H691.5V843.5H693.5V840.5H694.5H695.5H696.5H698.5V842.5H699.5V840.5H700.5H702.5V838.5H703.5H704.5V839.5H705.5H707.5V844.5H708.5V840.5H709.5H710.5V843.5H712.5V838.5H713.5V839.5H714.5V841.5H716.5V838.5H717.5V840.5H718.5V838.5H719.5V839.5H721.5H722.5H723.5V841.5H724.5V840.5H726.5V843.5H727.5V848.5H728.5V841.5H730.5V844.5H731.5H732.5V840.5H733.5V845.5H735.5V844.5H736.5V840.5H737.5V848.5H738.5V844.5H740.5V845.5H741.5V839.5H742.5V840.5H743.5H745.5V844.5H746.5H747.5V839.5H749.5V841.5H750.5H751.5V844.5H752.5V839.5H754.5H755.5V841.5H756.5V844.5H757.5V840.5H759.5V841.5H760.5V845.5H761.5V843.5H763.5V846.5H764.5V844.5H765.5V845.5H766.5V847.5H768.5H769.5V842.5H770.5V846.5H771.5V843.5H773.5V842.5H774.5V847.5H775.5V844.5H777.5H778.5V839.5H779.5V844.5H780.5H782.5V841.5H783.5V839.5H784.5V840.5H785.5V841.5H787.5V843.5H788.5V841.5H789.5V845.5H791.5V841.5H792.5V839.5H793.5V844.5H794.5V843.5H796.5V839.5H797.5V840.5H798.5H799.5V844.5H801.5H802.5V839.5H803.5V844.5H805.5V840.5H806.5V849.5H807.5V844.5H808.5V840.5H810.5H811.5V843.5H812.5V820.5V843.5H812.5V848.5H813.5V839.5H815.5V844.5H816.5H817.5V841.5H818.5V839.5H820.5V843.5H821.5H822.5H824.5V844.5H825.5V840.5H826.5V844.5H827.5V843.5H829.5V840.5H830.5H831.5V843.5H832.5V840.5H834.5V839.5H835.5V841.5H836.5V839.5H838.5V843.5H839.5V839.5H840.5V843.5H841.5V839.5H843.5V848.5H844.5V840.5H845.5V838.5H846.5V843.5H848.5V840.5H849.5V843.5H850.5V839.5H852.5V838.5H853.5V845.5H854.5V840.5H855.5V837.5H857.5V840.5H858.5H859.5V838.5H860.5V840.5H862.5V839.5H863.5V840.5H864.5V846.5H866.5V838.5H867.5V843.5H868.5V837.5H869.5V838.5H871.5H872.5V841.5H873.5V838.5H874.5H876.5V839.5H877.5V838.5H878.5V843.5H880.5V838.5H881.5V839.5H882.5V846.5H883.5V837.5H885.5V843.5H886.5V838.5H887.5V839.5H888.5V837.5H890.5V838.5H891.5H892.5V840.5H893.5V837.5H895.5V845.5H896.5V838.5H897.5V841.5H899.5H900.5V838.5H901.5V846.5H902.5V841.5H904.5V836.5H905.5H906.5V839.5H907.5V841.5H909.5V838.5H910.5V841.5H911.5V838.5H913.5V839.5H914.5V838.5H915.5V836.5H916.5V841.5H918.5V837.5H919.5V838.5H920.5V841.5H921.5V839.5H923.5V836.5H924.5V838.5H925.5V841.5H926.5V802.5V841.5H927.2V802.5V841.5H927.5H928.5H929.5V838.5H930.5H932.5V839.5H933.5V836.5H934.5V838.5H935.5V836.5H937.5V838.5H938.5V840.5H939.5V838.5H941.5V841.5H942.5V838.5H943.5H944.5V839.5H946.5V837.5H947.5V841.5H948.5V837.5H949.5V841.5H951.5V836.5H952.5V837.5H953.5V836.5H955.5V838.5H956.5V842.5H957.5V846.5H958.5V837.5H960.5V841.5H961.5V840.5H962.5V843.5H963.5V841.5H965.5V837.5H966.5V838.5H967.5V846.5H968.5V842.5H970.5V837.5H971.5V840.5H972.5H974.5V839.5H975.5H976.5H977.5V837.5H979.5V839.5H980.5V846.5H981.5V839.5H982.5V846.5H984.5V840.5H985.5H986.5V837.5H988.5V842.5H989.5V839.5H990.5V838.5H991.5V839.5H993.5V840.5H994.5V842.5H995.5V847.5H996.5V839.5H998.5V842.5H999.5V838.5H1000.5V839.5H1002.5V842.5H1003.5V839.5H1004.5V838.5H1005.5V842.5H1007.5V845.5H1008.5V839.5H1009.5H1010.5V838.5H1012.5V839.5H1013.5V837.5H1014.5V842.5H1016.5H1017.5H1018.5V838.5H1019.5V839.5H1021.5V846.5H1022.5V839.5H1023.5V840.5H1024.5V839.5H1026.5V845.5H1027.5V843.5H1028.5V839.5H1029.5V840.5H1031.5V842.5H1032.5V838.5H1033.5V839.5H1035.5V840.5H1036.5V842.5H1037.5V838.5H1038.5V842.5H1040.5V838.5H1041.5V842.5H1042.5V840.5H1043.5H1045.5V842.5H1046.5V841.5H1047.5V842.5H1049.5H1050.5H1051.5H1052.5H1054.5H1055.5H1056.5V843.5H1057.5V846.5H1059.5V842.5H1060.5H1061.5V837.5H1063.5V846.5H1064.5V842.5H1065.5H1066.5H1068.5V840.5H1069.5V839.5H1070.5H1071.5V837.5H1073.5V840.5H1074.5V842.5H1075.5H1077.5V841.5H1078.5V837.5H1079.5V840.5H1080.5V839.5H1082.5V838.5H1083.5V843.5H1084.5V842.5H1085.5V841.5H1087.5V842.5H1088.5V841.5H1089.5H1091.5H1092.5V838.5H1093.5V845.5H1094.5V841.5H1096.5H1097.5H1098.5H1099.5V838.5H1101.5V845.5H1102.5V837.5H1103.5V841.5H1104.5H1106.5V842.5H1107.5V841.5H1108.5H1110.5V842.5H1111.5V841.5H1112.5H1113.5H1115.5H1116.5H1117.5V838.5H1118.5V842.5H1120.5V841.5H1121.5V839.5H1122.5V842.5H1124.5V840.5H1125.5V844.5H1126.5V842.5H1127.5V839.5H1129.5V841.5H1130.5H1131.5H1132.5H1134.5H1135.5H1136.5V840.5H1138.5V841.5H1139.5V840.5H1140.5V841.5H1141.5V839.5H1143.5V840.5H1144.5V841.5H1145.5H1146.5V837.5H1148.5V841.5H1149.5V838.5H1150.5V841.5H1152.5V843.5H1153.5H1154.5V839.5H1155.5H1157.5V842.5H1158.5H1159.5V843.5H1160.5V838.5H1162.5V842.5H1163.5V839.5H1164.5V842.5H1166.5V843.5H1167.5V842.5H1168.5H1169.5V838.5H1171.5V842.5H1172.5V838.5H1173.5V841.5H1174.5V839.5H1176.5V842.5H1177.5H1178.5H1179.5V839.5H1181.5V842.5H1182.5H1183.5V846.5H1185.5V844.5H1186.5V846.5H1187.5H1188.5H1190.5H1191.5H1192.5V842.5H1193.5H1195.5H1196.5H1197.5V844.5H1199.5V845.5H1200.5H1201.5V844.5H1202.5V849.5H1204.5V845.5H1205.5H1206.5V844.5H1207.5V845.5H1209.5H1210.5H1211.5V842.5H1213.5V844.5H1214.5V840.5H1215.5V845.5H1216.5V844.5H1218.5V846.5H1219.5V845.5H1220.5H1221.5V846.5H1223.5V842.5H1224.5V846.5H1225.5H1227.5H1228.5H1229.5H1230.5H1232.5V843.5H1233.5V844.5H1234.5H1235.5V840.5H1237.5V843.5H1238.5V844.5H1239.5V845.5H1241.5H1242.5V844.5H1243.5H1244.5H1246.5H1247.5V841.5H1248.5V843.5H1249.5V844.5H1251.5V841.5H1252.5V845.5H1253.5V844.5H1254.5H1256.5V843.5H1257.5V844.5H1258.5H1260.5V840.5H1261.5V844.5H1262.5H1263.5V845.5H1265.5V843.5H1266.5V847.5H1267.5V843.5H1268.5V844.5H1270.5H1271.5H1272.5H1274.5H1275.5V839.5H1276.5V843.5H1277.5H1279.5H1280.5H1281.5V840.5H1282.5V842.5H1284.5V840.5H1285.5V839.5H1286.5V838.5H1288.5V844.5H1289.5V840.5H1290.5H1291.5V844.5H1293.5V840.5H1294.5V844.5H1295.5V838.5H1296.5H1298.5V841.5H1299.5V839.5H1300.5V840.5H1302.5V846.5H1303.5V842.5H1304.5V843.5H1305.5H1307.5H1308.5V840.5H1309.5V844.5H1310.5V816.5V844.5H1310.5V838.5H1312.5V840.5H1313.5V846.5H1314.5H1316.5V838.5H1317.5H1318.5V840.5H1319.5V838.5H1321.5V843.5H1322.5V841.5H1323.5V839.5H1324.5V842.5H1326.5V845.5H1327.5H1328.5V840.5H1329.5V842.5H1331.5V839.5H1332.5V838.5H1333.5V839.5H1335.5V840.5H1336.5V842.5H1337.5H1338.5V839.5H1340.5V840.5H1341.5V841.5H1342.5V842.5H1343.5H1345.5V839.5H1346.5H1347.5V837.5H1349.5V840.5H1350.5V841.5H1351.5V842.5H1352.5V840.5H1354.5V842.5H1355.5V837.5H1356.5V840.5H1357.5V842.5H1359.5V839.5H1360.5V838.5H1361.5V839.5H1363.5V840.5H1364.5V839.5H1365.5V842.5H1366.5V838.5H1368.5H1369.5H1370.5V839.5H1371.5V842.5H1373.5V837.5H1374.5V838.5H1375.5V842.5H1377.5V838.5H1378.5V842.5H1379.5V840.5H1380.5V837.5H1382.5V842.5H1383.5V837.5H1384.5H1385.5V839.5H1387.5V840.5H1388.5V841.5H1389.5V843.5H1390.5V842.5H1392.5V839.5H1393.5V838.5H1394.5V843.5H1396.5V837.5H1397.5V839.5H1398.5V841.5H1399.5V842.5H1401.5V838.5H1402.5V839.5H1403.5H1404.5V838.5H1406.5V837.5H1407.5V840.5H1408.5V839.5H1410.5V841.5H1411.5V840.5H1412.5V843.5H1413.5V839.5H1415.5V837.5H1416.5V839.5H1417.5V837.5H1418.5V838.5H1420.5V839.5H1421.5V838.5H1422.5H1424.5H1425.5V842.5H1426.5V838.5H1427.5V839.5H1429.5V840.5H1430.5V838.5H1431.5V840.5H1432.5V842.5H1434.5V841.5H1435.5V840.5H1436.5V842.5H1438.5V839.5H1439.5V838.5H1440.5V842.5H1441.5V839.5H1443.5V838.5H1444.5H1445.5V839.5H1446.5V837.5H1448.5V838.5H1449.5V839.5H1450.5V838.5H1452.5V837.5H1453.5V841.5H1454.5V838.5H1455.5V842.5H1457.5V839.5H1458.5V842.5H1459.5V839.5H1460.5V838.5H1462.5V840.5H1463.5V839.5H1464.5V838.5H1465.5V842.5H1467.5H1468.5V837.5H1469.5V842.5H1471.5H1472.5V845.5H1473.5V838.5H1474.5V841.5H1476.5V842.5H1477.5V847.5H1478.5V840.5H1479.5V838.5H1481.5V839.5H1482.5V841.5H1483.5V839.5H1485.5V838.5H1486.5V842.5H1487.5V841.5H1488.5V840.5H1490.5V837.5H1491.5V842.5H1492.5V840.5H1493.5V842.5H1495.5H1496.5H1497.5V839.5H1499.5V838.5H1500.5V839.5H1501.5H1502.5V842.5H1504.5V841.5H1505.5V846.5H1506.5V840.5H1507.5V842.5H1509.5V846.5H1510.5V842.5H1511.5V837.5H1513.5V839.5H1514.5V838.5H1515.5V839.5H1516.5V838.5H1518.5H1519.5V841.5H1520.5V837.5H1521.5V838.5H1523.5V841.5H1524.5V837.5H1525.5H1527.5V836.5H1528.5V841.5H1529.5V838.5H1530.5V837.5H1532.5V836.5H1533.5V837.5H1534.5V838.5H1535.5V839.5H1537.5V842.5H1538.5V841.5H1539.5V838.5H1540.5V837.5H1542.5V838.5H1543.5V841.5H1544.5V838.5H1546.5V839.5H1547.5V836.5H1548.5V838.5H1549.5H1551.5H1552.5V837.5H1553.5V838.5H1554.5V836.5H1556.5V841.5H1557.5V839.5H1558.5V837.5H1560.5V840.5H1561.5V838.5H1562.5V837.5H1563.5V839.5H1565.5V840.5H1566.5H1567.5H1568.5H1570.5H1571.5V839.5H1572.5V836.5H1574.5V841.5H1575.5V840.5H1576.5H1577.5V841.5H1579.5V839.5H1580.5V840.5H1581.5V839.5H1582.5V840.5H1584.5H1585.5H1586.5H1588.5V839.5H1589.5V841.5H1590.5V839.5H1591.5V841.5H1593.5V839.5H1594.5V841.5H1595.5V840.5H1596.5V841.5H1598.5V836.5H1599.5V839.5H1600.5H1602.5V836.5H1603.5V840.5H1604.5V839.5H1605.5V840.5H1607.5H1608.5H1609.5V836.5H1610.5V837.5H1612.5V839.5H1613.5H1614.5V837.5H1615.5V840.5H1617.5H1618.5V839.5H1619.5V837.5H1621.5V840.5H1622.5H1623.5V836.5H1624.5V840.5H1626.5V836.5H1627.5V837.5H1628.5V839.5H1629.5V836.5H1631.5V840.5H1632.5V835.5H1633.5V840.5H1635.5V839.5H1636.5V841.5H1637.5V839.5H1638.5V837.5H1640.5V841.5H1641.5V838.5H1642.5V841.5H1643.5H1645.5H1646.5V838.5H1647.5V841.5H1649.5H1650.5V842.5H1651.5V841.5H1652.5V836.5H1654.5V839.5H1655.5V837.5H1656.5V841.5H1657.5H1659.5V837.5H1660.5V838.5H1661.5V841.5H1663.5V842.5H1664.5V836.5H1665.5V842.5H1666.5V846.5H1668.5V841.5H1669.5V836.5H1670.5V842.5H1671.5V845.5H1673.5V842.5H1674.5V841.5H1675.5V843.5H1677.5V842.5H1678.5H1679.5H1680.5V841.5H1682.5V837.5H1683.5V842.5H1684.5V841.5H1685.5V846.5H1687.5V841.5H1688.5V843.5H1689.5V763.5V843.5H1690.2V763.5V843.5H1689.5V842.5H1690.5H1692.5V843.5H1693.5H1694.5V841.5H1696.5V842.5H1697.5H1698.5H1699.5H1701.5V838.5H1702.5V842.5H1703.5H1704.5V838.5H1706.5V839.5H1707.5V838.5H1708.5V847.5H1709.5V830.5V847.5H1710.5V843.5H1711.5H1712.5V842.5H1713.5V843.5H1715.5H1716.5V842.5H1717.5H1718.5V839.5H1720.5V838.5H1721.5V840.5H1722.5V838.5H1724.5V840.5H1725.5H1726.5H1727.5V843.5H1729.5H1730.5V839.5H1731.5V844.5H1732.5V839.5H1734.5V842.5H1735.5V839.5H1736.5V843.5H1738.5V841.5H1739.5V843.5H1740.5V841.5H1741.5V843.5H1743.5H1744.5V838.5H1745.5V844.5H1746.5V842.5H1748.5V843.5H1749.5H1750.5H1751.5V840.5H1753.5V848.5H1754.5V843.5H1755.5H1757.5H1758.5H1759.5V838.5H1760.5V843.5H1762.5V842.5H1763.5V843.5H1764.5H1765.5V844.5H1767.5V843.5H1768.5V842.5H1769.5V843.5H1771.5H1772.5V844.5H1773.5H1774.5V847.5H1776.5V843.5H1777.5H1778.5V839.5H1779.5V843.5H1781.5V842.5H1782.5V841.5H1783.5V842.5H1785.5H1786.5V839.5H1787.5V841.5H1788.5V842.5H1790.5H1791.5V841.5H1792.5V843.5H1793.5V842.5H1795.5V838.5H1796.5V840.5H1797.5V842.5H1799.5V846.5H1800.5V841.5H1801.5V842.5H1802.5H1804.5H1805.5H1806.5V846.5H1807.5V838.5H1809.5V842.5H1810.5V846.5H1811.5V841.5H1813.5V846.5H1814.5V842.5H1815.5V841.5H1816.5V838.5H1818.5V842.5H1819.5H1820.5H1821.5V839.5H1823.5V846.5H1824.5V841.5H1825.5H1826.5V842.5H1828.5V839.5H1829.5V838.5H1830.5V842.5H1832.5V838.5H1833.5V842.5H1834.5V843.5H1835.5V839.5H1837.5V838.5H1838.5V842.5H1839.5H1840.5V838.5H1842.5V837.5H1843.5V842.5H1844.5H1846.5V841.5H1847.5V839.5H1848.5V844.5H1849.5V843.5H1851.5H1852.5V844.5H1853.5V841.5H1854.5V843.5H1856.5V844.5H1857.5" stroke="#0a120a" stroke-width="1.3" stroke-linejoin="miter" fill="none"/></svg>
<div class="a" style="left:0px;top:1016px;width:1895px;height:7px;background:#3f3b30;"></div>
<div class="a" style="left:42px;top:1016px;width:288px;height:7px;background:#f3f3f3;border-top:1px solid #cfcfcf"></div>
<div class="t" style="left:1815px;top:1017.5px;font-size:11.5px;color:#fff;letter-spacing:-0.5px">18:44</div></body></html>
